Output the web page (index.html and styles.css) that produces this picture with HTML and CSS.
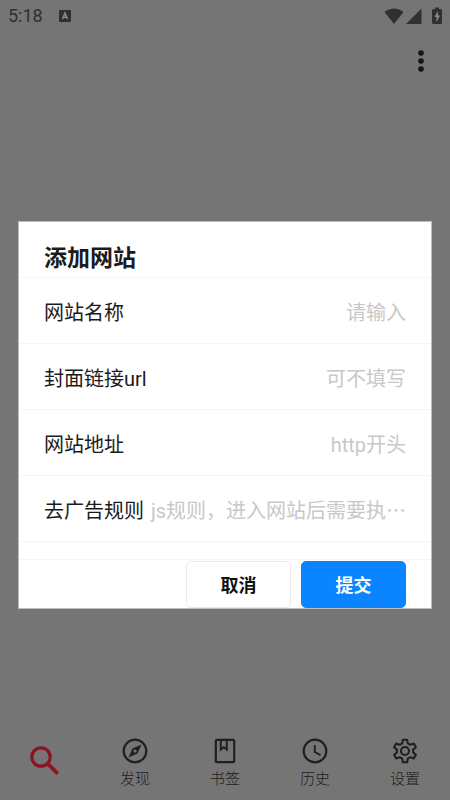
FILE: index.html
```html
<!DOCTYPE html>
<html lang="zh-CN">
<head>
<meta charset="utf-8">
<meta name="viewport" content="width=device-width, initial-scale=1">
<title>添加网站</title>
<link rel="stylesheet" href="styles.css">
</head>
<body>
<div class="app">
  <header class="status-bar">
    <div class="status-group">
      <time>5:18</time>
      <svg class="notice" width="14" height="14" viewBox="0 0 14 14" aria-hidden="true">
        <rect x="0" y="1" width="12" height="12" rx="1" fill="currentColor"/>
        <path d="M3.500 10 6 4l2.500 6M4.400 8.300h3.200" fill="none" stroke="#8a8a8a" stroke-width="1.500"/>
      </svg>
    </div>
    <div class="status-icons">
      <svg width="20" height="18" viewBox="0 0 20 18" aria-hidden="true"><path d="M.5 5C6 .2 14 .2 19.500 5L10 17z" fill="currentColor"/></svg>
      <svg width="16" height="18" viewBox="0 0 16 18" aria-hidden="true"><path d="M15.500 1.500V17H0z" fill="currentColor"/></svg>
      <svg class="battery" width="10" height="18" viewBox="0 0 10 18" aria-hidden="true"><path d="M3 .5h4V2h1.500Q10 2 10 3.500v12Q10 17 8.500 17h-7Q0 17 0 15.500v-12Q0 2 1.500 2H3z" fill="currentColor"/><path d="M6 4 2.500 10h2v5L8 8.500H6z" fill="#8a8a8a"/></svg>
    </div>
  </header>
  <div class="toolbar">
    <button class="more" type="button" aria-label="更多">
      <svg width="6" height="22" viewBox="0 0 6 22" aria-hidden="true"><g fill="currentColor"><circle cx="3" cy="3" r="2.800"/><circle cx="3" cy="11" r="2.800"/><circle cx="3" cy="19" r="2.800"/></g></svg>
    </button>
  </div>
  <main class="content"></main>
  <nav class="tabs">
    <a class="tab active" href="#search" aria-label="搜索">
      <svg width="30" height="30" viewBox="0 0 30 30" aria-hidden="true"><g fill="none" stroke="currentColor"><circle cx="11" cy="11" r="9.200" stroke-width="3.200"/><path d="m18 18 9.700 9.700" stroke-width="3.800"/></g></svg>
    </a>
    <a class="tab" href="#discover">
      <svg width="26" height="26" viewBox="0 0 26 26" aria-hidden="true"><circle cx="13" cy="13" r="11.300" fill="none" stroke="currentColor" stroke-width="2.200"/><path fill="currentColor" fill-rule="evenodd" d="m19.500 6.500-4 9-9 4 4-9zM13 11.400a1.600 1.600 0 1 0 0 3.200 1.600 1.600 0 0 0 0-3.200z"/></svg>
      <span>发现</span>
    </a>
    <a class="tab" href="#bookmarks">
      <svg width="26" height="26" viewBox="0 0 26 26" aria-hidden="true"><rect x="3.800" y="1.800" width="18.400" height="22.400" rx="1.500" fill="none" stroke="currentColor" stroke-width="2.200"/><path d="M8.800 2v9.500l3-2.300 3 2.300V2" fill="none" stroke="currentColor" stroke-width="2"/></svg>
      <span>书签</span>
    </a>
    <a class="tab" href="#history">
      <svg width="26" height="26" viewBox="0 0 26 26" aria-hidden="true"><g fill="none" stroke="currentColor"><circle cx="13" cy="13" r="11.300" stroke-width="2.200"/><path d="M12.800 7v7l5.700 3.200" stroke-width="1.900"/></g></svg>
      <span>历史</span>
    </a>
    <a class="tab" href="#settings">
      <svg width="26" height="26" viewBox="0 0 26 26" aria-hidden="true"><g fill="none" stroke="currentColor" stroke-width="2.100" stroke-linejoin="round"><path d="M10.900 1.800h4.200l.7 3.500 2.500 1.500 3.500-1.200 2.100 3.600-2.800 2.400v2.800l2.800 2.400-2.100 3.600-3.500-1.200-2.500 1.500-.7 3.500h-4.200l-.7-3.500-2.500-1.500-3.500 1.200-2.100-3.600 2.800-2.400v-2.800L2.100 9.200l2.100-3.600 3.500 1.200 2.500-1.500z"/><circle cx="13" cy="13" r="4"/></g></svg>
      <span>设置</span>
    </a>
  </nav>
</div>

<div class="overlay">
  <form class="dialog" role="dialog" aria-labelledby="dialog-title">
    <h1 class="title" id="dialog-title">添加网站</h1>
    <div class="row">
      <label for="name">网站名称</label>
      <input id="name" type="text" placeholder="请输入">
    </div>
    <div class="row">
      <label for="cover">封面链接url</label>
      <input id="cover" type="text" placeholder="可不填写">
    </div>
    <div class="row">
      <label for="address">网站地址</label>
      <input id="address" type="text" placeholder="http开头">
    </div>
    <div class="row">
      <label for="rules">去广告规则</label>
      <input id="rules" type="text" placeholder="js规则，进入网站后需要执⋯">
    </div>
    <div class="actions">
      <button class="button" type="button">取消</button>
      <button class="button primary" type="submit">提交</button>
    </div>
  </form>
</div>
</body>
</html>
```
FILE: styles.css
```css
* {
  box-sizing: border-box;
}

body {
  margin: 0;
  background: #757575;
  color: #1b1b1b;
  font-family: Roboto, "Noto Sans CJK SC", sans-serif;
}

button,
input {
  font-family: inherit;
}

svg {
  display: block;
}

.app {
  display: flex;
  flex-direction: column;
  min-height: 100vh;
}

.status-bar {
  display: flex;
  justify-content: space-between;
  align-items: center;
  height: 31px;
  padding: 0 8px;
  color: #303030;
  font-size: 18px;
}

.status-group {
  display: flex;
  align-items: center;
  gap: 16px;
}

.status-icons {
  display: flex;
  gap: 2px;
}

.battery {
  margin-left: 8px;
}

.toolbar {
  display: flex;
  justify-content: flex-end;
  padding: 15px 22px;
}

.more {
  padding: 4px;
  border: 0;
  background: none;
  color: #151515;
}

.content {
  flex: 1;
}

.tabs {
  display: flex;
  height: 68px;
}

.tab {
  flex: 1;
  display: flex;
  flex-direction: column;
  align-items: center;
  padding-top: 6px;
  color: #202020;
  font-size: 15px;
  font-weight: 300;
  line-height: 24px;
  text-decoration: none;
}

.tab span {
  padding-top: 3px;
}

.tab.active {
  padding-top: 14px;
  color: #8b1424;
}

.overlay {
  position: fixed;
  inset: 0;
  display: flex;
  align-items: center;
  padding: 29px 18px 0;
}

.dialog {
  width: 100%;
  border: 1px solid #bdbdbd;
  background: #fff;
}

.title {
  margin: 0;
  padding: 20px 25px 2px;
  border-bottom: 1px solid #f7f7f7;
  font-size: 23px;
  font-weight: 700;
  line-height: 33px;
}

.row {
  display: flex;
  align-items: center;
  gap: 5px;
  height: 66px;
  padding: 2px 25px 0;
  border-bottom: 1px solid #f5f5f5;
  font-size: 20px;
}

.row label {
  white-space: nowrap;
}

.row input {
  flex: 1;
  min-width: 0;
  padding: 4px 0 0;
  border: 0;
  outline: 0;
  background: none;
  color: inherit;
  font-size: 20px;
  text-align: right;
}

.row input::placeholder {
  color: #c8c8c8;
}

.actions {
  display: flex;
  justify-content: flex-end;
  gap: 10px;
  margin-top: 17px;
  padding: 1px 25px 0;
  border-top: 1px solid #f5f5f5;
}

.button {
  width: 105px;
  height: 47px;
  border: 1px solid #ebebeb;
  border-radius: 5px;
  background: #fff;
  color: #111;
  font-size: 18px;
  font-weight: 700;
}

.button.primary {
  border-color: #0a84ff;
  background: #0a84ff;
  color: #fff;
}
```
